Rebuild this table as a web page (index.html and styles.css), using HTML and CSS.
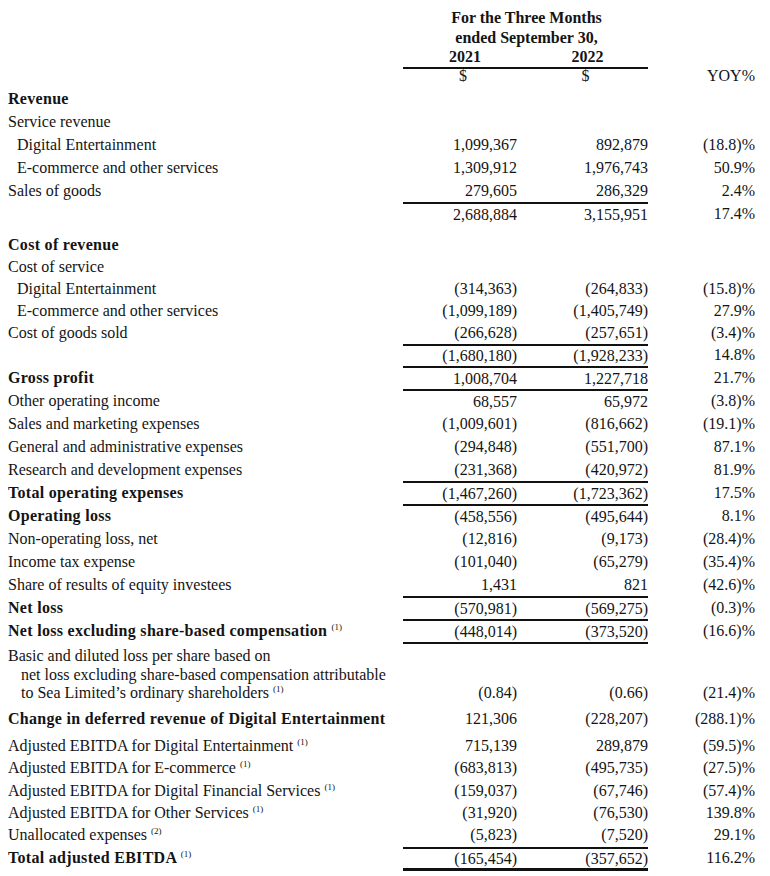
FILE: index.html
```html
<!DOCTYPE html>
<html lang="en">
<head>
<meta charset="utf-8">
<title>Sea Limited - Three Months ended September 30</title>
<link rel="stylesheet" href="styles.css">
</head>
<body>
<div class="sheet">
  <div class="row head">
    <div class="lbl"></div>
    <div class="period">For the Three Months<br>ended September 30,</div>
    <div class="c3"></div>
  </div>
  <div class="row years">
    <div class="lbl"></div>
    <div class="yr">2021</div>
    <div class="yr">2022</div>
    <div class="c3"></div>
  </div>
  <div class="row cur">
    <div class="lbl"></div>
    <div class="yr ul">$</div>
    <div class="yr ul">$</div>
    <div class="num">YOY%</div>
  </div>

  <div class="row first"><div class="lbl b">Revenue</div><div class="num"></div><div class="num"></div><div class="num"></div></div>
  <div class="row"><div class="lbl">Service revenue</div><div class="num"></div><div class="num"></div><div class="num"></div></div>
  <div class="row"><div class="lbl ind">Digital Entertainment</div><div class="num">1,099,367</div><div class="num">892,879</div><div class="num">(18.8)%</div></div>
  <div class="row"><div class="lbl ind">E-commerce and other services</div><div class="num">1,309,912</div><div class="num">1,976,743</div><div class="num">50.9%</div></div>
  <div class="row"><div class="lbl">Sales of goods</div><div class="num">279,605</div><div class="num">286,329</div><div class="num">2.4%</div></div>
  <div class="row"><div class="lbl"></div><div class="num ul">2,688,884</div><div class="num ul">3,155,951</div><div class="num">17.4%</div></div>

  <div class="row gap"><div class="lbl b">Cost of revenue</div><div class="num"></div><div class="num"></div><div class="num"></div></div>
  <div class="row mid"><div class="lbl">Cost of service</div><div class="num"></div><div class="num"></div><div class="num"></div></div>
  <div class="row mid"><div class="lbl ind">Digital Entertainment</div><div class="num">(314,363)</div><div class="num">(264,833)</div><div class="num">(15.8)%</div></div>
  <div class="row mid"><div class="lbl ind">E-commerce and other services</div><div class="num">(1,099,189)</div><div class="num">(1,405,749)</div><div class="num">27.9%</div></div>
  <div class="row mid"><div class="lbl">Cost of goods sold</div><div class="num">(266,628)</div><div class="num">(257,651)</div><div class="num">(3.4)%</div></div>
  <div class="row mid"><div class="lbl"></div><div class="num ul">(1,680,180)</div><div class="num ul">(1,928,233)</div><div class="num">14.8%</div></div>
  <div class="row"><div class="lbl b">Gross profit</div><div class="num ul">1,008,704</div><div class="num ul">1,227,718</div><div class="num">21.7%</div></div>
  <div class="row"><div class="lbl">Other operating income</div><div class="num ul">68,557</div><div class="num ul">65,972</div><div class="num">(3.8)%</div></div>
  <div class="row"><div class="lbl">Sales and marketing expenses</div><div class="num">(1,009,601)</div><div class="num">(816,662)</div><div class="num">(19.1)%</div></div>
  <div class="row"><div class="lbl">General and administrative expenses</div><div class="num">(294,848)</div><div class="num">(551,700)</div><div class="num">87.1%</div></div>
  <div class="row"><div class="lbl">Research and development expenses</div><div class="num">(231,368)</div><div class="num">(420,972)</div><div class="num">81.9%</div></div>
  <div class="row"><div class="lbl b">Total operating expenses</div><div class="num ul">(1,467,260)</div><div class="num ul">(1,723,362)</div><div class="num">17.5%</div></div>
  <div class="row"><div class="lbl b">Operating loss</div><div class="num ul">(458,556)</div><div class="num ul">(495,644)</div><div class="num">8.1%</div></div>
  <div class="row"><div class="lbl">Non-operating loss, net</div><div class="num">(12,816)</div><div class="num">(9,173)</div><div class="num">(28.4)%</div></div>
  <div class="row"><div class="lbl">Income tax expense</div><div class="num">(101,040)</div><div class="num">(65,279)</div><div class="num">(35.4)%</div></div>
  <div class="row"><div class="lbl">Share of results of equity investees</div><div class="num">1,431</div><div class="num">821</div><div class="num">(42.6)%</div></div>
  <div class="row"><div class="lbl b">Net loss</div><div class="num ul">(570,981)</div><div class="num ul">(569,275)</div><div class="num">(0.3)%</div></div>
  <div class="row"><div class="lbl b">Net loss excluding share-based compensation <sup class="fn">(1)</sup></div><div class="num ul">(448,014)</div><div class="num ul">(373,520)</div><div class="num">(16.6)%</div></div>

  <div class="row multi">
    <div class="lbl">
      <div>Basic and diluted loss per share based on</div>
      <div class="ind2">net loss excluding share-based compensation attributable</div>
      <div class="ind2">to Sea Limited’s ordinary shareholders <sup class="fn">(1)</sup></div>
    </div>
    <div class="num ul">(0.84)</div><div class="num ul">(0.66)</div><div class="num">(21.4)%</div>
  </div>
  <div class="row chg"><div class="lbl b">Change in deferred revenue of Digital Entertainment</div><div class="num">121,306</div><div class="num">(228,207)</div><div class="num">(288.1)%</div></div>

  <div class="row tight adj"><div class="lbl">Adjusted EBITDA for Digital Entertainment <sup class="fn">(1)</sup></div><div class="num">715,139</div><div class="num">289,879</div><div class="num">(59.5)%</div></div>
  <div class="row tight"><div class="lbl">Adjusted EBITDA for E-commerce <sup class="fn">(1)</sup></div><div class="num">(683,813)</div><div class="num">(495,735)</div><div class="num">(27.5)%</div></div>
  <div class="row tight"><div class="lbl">Adjusted EBITDA for Digital Financial Services <sup class="fn">(1)</sup></div><div class="num">(159,037)</div><div class="num">(67,746)</div><div class="num">(57.4)%</div></div>
  <div class="row tight"><div class="lbl">Adjusted EBITDA for Other Services <sup class="fn">(1)</sup></div><div class="num">(31,920)</div><div class="num">(76,530)</div><div class="num">139.8%</div></div>
  <div class="row tight"><div class="lbl">Unallocated expenses <sup class="fn">(2)</sup></div><div class="num">(5,823)</div><div class="num">(7,520)</div><div class="num">29.1%</div></div>
  <div class="row last"><div class="lbl b">Total adjusted EBITDA <sup class="fn">(1)</sup></div><div class="num ul dbl">(165,454)</div><div class="num ul dbl">(357,652)</div><div class="num">116.2%</div></div>
</div>
</body>
</html>
```

FILE: styles.css
```css
html, body {
  background: #ffffff;
}
body {
  margin: 8px;
  font-family: "Liberation Serif", "Times New Roman", serif;
  font-size: 16px;
  color: #141414;
}
.sheet {
  width: 747px;
  display: flex;
  flex-direction: column;
}
.row {
  display: grid;
  grid-template-columns: 395px 114px 131px 107px;
  height: 23px;
  line-height: 23px;
}
.row > div {
  box-sizing: border-box;
  white-space: nowrap;
}
.head {
  height: auto;
  line-height: 19.5px;
}
.period {
  grid-column: 2 / span 2;
  text-align: center;
  font-weight: bold;
  padding-left: 2px;
}
.years {
  height: 19.5px;
  line-height: 19.5px;
}
.yr {
  text-align: center;
  padding-left: 10px;
  font-weight: bold;
}
.cur {
  height: 16px;
  line-height: 13px;
}
.cur .yr {
  font-weight: normal;
  padding-left: 6px;
}
.cur .num {
  padding-top: 2px;
}
.first {
  margin-top: 4px;
}
.gap {
  margin-top: 8px;
}
.mid {
  height: 22.2px;
  line-height: 22.2px;
}
.lbl {
  text-align: left;
}
.b {
  font-weight: bold;
  letter-spacing: 0.3px;
}
.ind {
  padding-left: 9px;
}
.ind2 {
  padding-left: 13px;
}
.num {
  text-align: right;
}
.ul {
  border-top: 2px solid #111;
  line-height: 21px;
}
.mid .ul {
  line-height: 20.2px;
}
.cur .ul {
  line-height: 13px;
}
.multi {
  height: auto;
  line-height: 18.5px;
  align-items: end;
}
.multi .lbl {
  padding-top: 5px;
}
.multi .num {
  line-height: 18.5px;
  align-self: stretch;
  display: flex;
  align-items: flex-end;
  justify-content: flex-end;
}
.chg {
  margin-top: 4.5px;
}
.tight {
  height: 22.4px;
  line-height: 22.4px;
}
.adj {
  margin-top: 4.3px;
}
.dbl {
  border-bottom: 3px solid #111;
}
.last {
  height: 24px;
  line-height: 21px;
}
.last .ul {
  line-height: 19px;
}
.fn {
  font-size: 9px;
  font-weight: normal;
  letter-spacing: 0;
  vertical-align: 6px;
  line-height: 0;
}
```
